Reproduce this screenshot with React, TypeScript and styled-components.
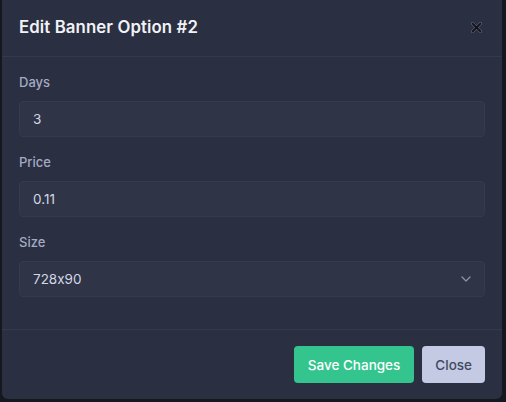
import React from 'react';
import styled, { createGlobalStyle } from 'styled-components';

const GlobalStyle = createGlobalStyle`
  html, body {
    margin: 0;
    padding: 0;
    background: #161820;
  }
  body {
    font-family: Inter, "Open Sans", sans-serif;
    font-feature-settings: "calt" 0;
  }
  * { box-sizing: border-box; }
`;

const Backdrop = styled.div`
  width: 506px;
  height: 402px;
  overflow: hidden;
  background: #161820;
  display: flex;
  align-items: flex-start;
`;

const Modal = styled.div`
  width: 500px;
  height: 403px;
  margin: -4px 0 0 2px;
  background: #2a2f41;
  border-radius: 6px;
  display: flex;
  flex-direction: column;
`;

const Header = styled.div`
  height: 61px;
  padding: 2px 19px 0 17px;
  display: flex;
  align-items: center;
  justify-content: space-between;
  border-bottom: 1px solid #343a4d;
`;

const Title = styled.h5`
  margin: 0;
  font-size: 16.8px;
  font-weight: 600;
  color: #f1f2f6;
  letter-spacing: 0.1px;
`;

const CloseX = styled.button`
  width: 16px;
  height: 16px;
  padding: 0;
  margin: 0 -1px 0 0;
  border: 0;
  background: transparent;
  display: flex;
  align-items: center;
  justify-content: center;
`;

const Body = styled.div`
  padding: 15px 17px 32px;
  display: flex;
  flex-direction: column;
  gap: 15px;
  border-bottom: 1px solid #343a4d;
`;

const Field = styled.div`
  display: flex;
  flex-direction: column;
`;

const Label = styled.label`
  font-size: 13px;
  line-height: 20px;
  font-weight: 500;
  color: #a4aac3;
  margin-bottom: 9px;
`;

const InputBox = styled.div`
  height: 36px;
  padding: 0 13px;
  background: #2f3447;
  border: 1px solid #353b4f;
  border-radius: 4px;
  display: flex;
  align-items: center;
  justify-content: space-between;
  font-size: 13.5px;
  color: #d3d7e5;
`;

const Footer = styled.div`
  flex: 1;
  padding: 16px 17px 0 17px;
  display: flex;
  justify-content: flex-end;
  align-items: flex-start;
  gap: 8px;
`;

const Button = styled.button<{ $variant: 'primary' | 'light' }>`
  height: 37px;
  padding: 0 ${p => (p.$variant === 'primary' ? '14px' : '13px')};
  border: 0;
  border-radius: 4px;
  font-family: inherit;
  font-size: 13.5px;
  font-weight: 500;
  background: ${p => (p.$variant === 'primary' ? '#34c58f' : '#c4cae3')};
  color: ${p => (p.$variant === 'primary' ? '#ffffff' : '#414860')};
`;

function Chevron() {
  return (
    <svg width="10" height="6" viewBox="0 0 10 6" fill="none">
      <path d="M1 1l4 4 4-4" stroke="#8b91a8" strokeWidth="1.3" strokeLinecap="round" strokeLinejoin="round" />
    </svg>
  );
}

export default function App() {
  return (
    <>
      <GlobalStyle />
      <Backdrop>
        <Modal>
          <Header>
            <Title>Edit Banner Option #2</Title>
            <CloseX aria-label="Close">
              <svg width="11" height="11" viewBox="0 0 11 11">
                <path d="M1.5 1.5l8 8M9.5 1.5l-8 8" stroke="#6b7086" strokeWidth="3" strokeLinecap="round" />
                <path d="M1.5 1.5l8 8M9.5 1.5l-8 8" stroke="#101218" strokeWidth="1.8" strokeLinecap="round" />
              </svg>
            </CloseX>
          </Header>
          <Body>
            <Field>
              <Label>Days</Label>
              <InputBox>3</InputBox>
            </Field>
            <Field>
              <Label>Price</Label>
              <InputBox>0.11</InputBox>
            </Field>
            <Field>
              <Label>Size</Label>
              <InputBox>
                <span>728x90</span>
                <Chevron />
              </InputBox>
            </Field>
          </Body>
          <Footer>
            <Button $variant="primary">Save Changes</Button>
            <Button $variant="light">Close</Button>
          </Footer>
        </Modal>
      </Backdrop>
    </>
  );
}
